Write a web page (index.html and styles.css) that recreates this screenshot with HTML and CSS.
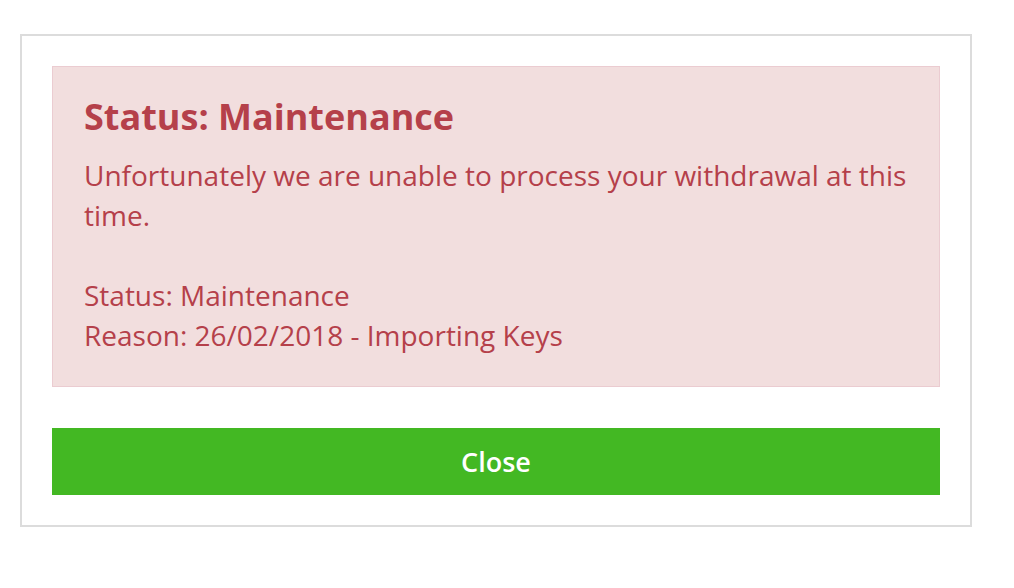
FILE: index.html
```html
<!DOCTYPE html>
<html>
<head>
<meta charset="utf-8">
<link rel="stylesheet" href="styles.css">
</head>
<body>
<div class="modal">
  <div class="alert">
    <h2 class="alert-title">Status: Maintenance</h2>
    <p class="alert-text">Unfortunately we are unable to process your withdrawal at this time.<br><br>Status: Maintenance<br>Reason: 26/02/2018 - Importing Keys</p>
  </div>
  <button class="btn-close">Close</button>
</div>
</body>
</html>
```
FILE: styles.css
```css
html, body {
  margin: 0;
  padding: 0;
  background: #fff;
}
body {
  padding: 34px 0 0 20px;
  font-family: "Open Sans", sans-serif;
}
.modal {
  width: 888px;
  padding: 30px;
  border: 2px solid #dcdcdc;
  display: flex;
  flex-direction: column;
  gap: 41px;
}
.alert {
  background: #f2dede;
  border: 1px solid #ebccd1;
  color: #b5404a;
  padding: 28px 31px 31px;
}
.alert-title {
  margin: 0 0 16px;
  font-size: 36px;
  font-weight: 700;
  line-height: 44px;
}
.alert-text {
  margin: 0;
  font-size: 28px;
  line-height: 40px;
}
.btn-close {
  height: 67px;
  border: 0;
  background: #43b823;
  color: #fff;
  font-family: "Open Sans", sans-serif;
  font-size: 27px;
  font-weight: 600;
  padding: 0;
}
```
